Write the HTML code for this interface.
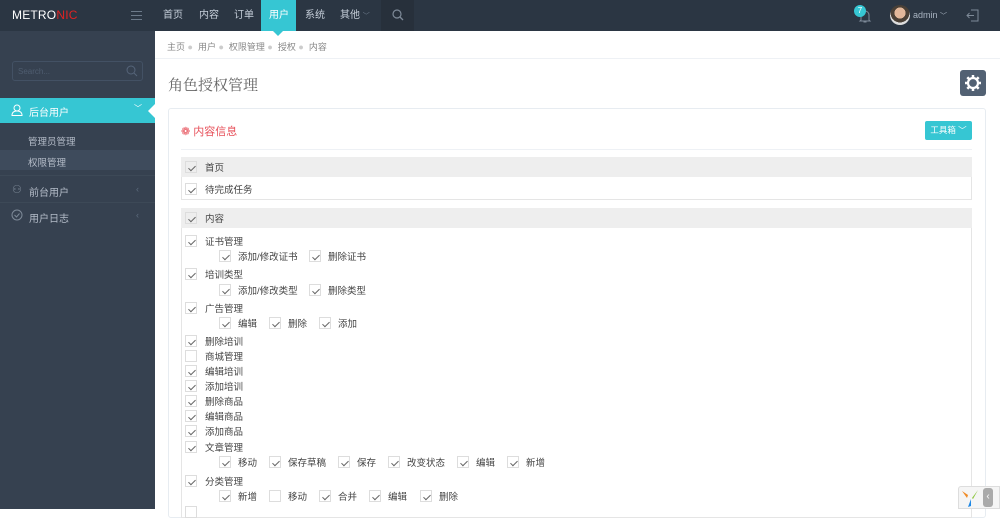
<!DOCTYPE html>
<html><head><meta charset="utf-8"><style>
*{margin:0;padding:0;box-sizing:border-box}
body{width:1000px;height:509px;overflow:hidden;position:relative;background:#fff;font-family:"Liberation Sans","Noto Sans CJK SC",sans-serif;font-size:10px;color:#333}
.a{position:absolute}
.top{left:0;top:0;width:1000px;height:31px;background:#2b3643}
.nav{top:1px;height:31px;line-height:30px;color:#c6cfda;font-size:10px}
.side{left:0;top:31px;width:155px;height:478px;background:#364150}
.cb{position:absolute;width:12px;height:12px;border:1px solid #ddd;background:#fff}
.cb.k::after{content:"";position:absolute;left:3.5px;top:1.5px;width:3px;height:6px;border:solid #666;border-width:0 1.1px 1.1px 0;transform:rotate(45deg)}
.t{position:absolute;font-size:9.5px;color:#444;line-height:12px;margin-top:1.5px}
.hd{position:absolute;left:181px;width:791px;height:20px;background:#eee}
</style></head><body>
<div class="a top"></div>
<div class="a" style="left:12px;top:8px;font-size:12px;color:#fff;letter-spacing:0.2px">METRO<span style="color:#e02222">NIC</span></div>
<div class="a" style="left:131px;top:11px;width:11px;height:1px;background:#6c7a8a;box-shadow:0 4px 0 #6c7a8a,0 8px 0 #6c7a8a"></div>
<div class="a nav" style="left:163px">首页</div>
<div class="a nav" style="left:199px">内容</div>
<div class="a nav" style="left:234px">订单</div>
<div class="a" style="left:261px;top:0;width:35px;height:31px;background:#36c6d3"></div>
<div class="a" style="left:273px;top:31px;width:0;height:0;border:5px solid transparent;border-top-color:#36c6d3;border-bottom:0"></div>
<div class="a nav" style="left:269px;color:#fff">用户</div>
<div class="a nav" style="left:305px">系统</div>
<div class="a nav" style="left:340px">其他 <span style="font-size:7px;color:#6c7a8a">﹀</span></div>
<div class="a" style="left:381px;top:0;width:33px;height:31px;background:#27303b"></div>
<svg class="a" style="left:392px;top:9px" width="12" height="12"><circle cx="5" cy="5" r="4" fill="none" stroke="#7e8a98" stroke-width="1.2"/><line x1="8" y1="8" x2="11" y2="11" stroke="#7e8a98" stroke-width="1.3"/></svg>
<svg class="a" style="left:858px;top:8px" width="14" height="16"><path d="M3 12V7a4 4 0 0 1 8 0v5l1 1H2z M5.5 14h3" fill="none" stroke="#7e8a98" stroke-width="1"/></svg>
<div class="a" style="left:854px;top:5px;width:12px;height:12px;border-radius:6px;background:#36c6d3;color:#fff;font-size:8px;text-align:center;line-height:12px">7</div>
<div class="a" style="left:890px;top:5px;width:20px;height:20px;border-radius:10px;background:radial-gradient(circle at 50% 40%,#e2b79a 0 35%,#4a4036 36% 60%,#ddd 61%)"></div>
<div class="a" style="left:913px;top:10px;font-size:9px;color:#a9b4c1">admin <span style="font-size:7px">﹀</span></div>
<svg class="a" style="left:966px;top:9px" width="13" height="13"><path d="M5 1h7v11H5 M1 6.5h7 M3.5 4l-2.5 2.5 2.5 2.5" fill="none" stroke="#7e8a98" stroke-width="1"/></svg>

<div class="a side"></div>
<div class="a" style="left:12px;top:61px;width:131px;height:20px;border:1px solid #435164;border-radius:3px"></div>
<div class="a" style="left:18px;top:67px;font-size:8px;color:#4f5d70">Search...</div>
<svg class="a" style="left:126px;top:65px" width="12" height="12"><circle cx="5" cy="5" r="4" fill="none" stroke="#56657a" stroke-width="1"/><line x1="8" y1="8" x2="11" y2="11" stroke="#56657a"/></svg>
<div class="a" style="left:0;top:98px;width:155px;height:25px;background:#36c6d3"></div>
<div class="a" style="left:148px;top:104px;width:0;height:0;border:7px solid transparent;border-right-color:#fff;border-left:0"></div>
<svg class="a" style="left:11px;top:104px" width="12" height="12"><circle cx="6" cy="4" r="3" fill="none" stroke="#fff"/><path d="M1 11.5c0-3 2-4.5 5-4.5s5 1.5 5 4.5z" fill="none" stroke="#fff"/></svg>
<div class="a" style="left:29px;top:104px;color:#fff;font-size:10px">后台用户</div>
<div class="a" style="left:134px;top:103px;color:#fff;font-size:8px">﹀</div>
<div class="a" style="left:0;top:150px;width:155px;height:20px;background:#3e4b5c"></div>
<div class="a" style="left:28px;top:134px;color:#b4bcc8;font-size:9.5px">管理员管理</div>
<div class="a" style="left:28px;top:155px;color:#b4bcc8;font-size:9.5px">权限管理</div>
<div class="a" style="left:0;top:175px;width:155px;height:1px;background:#3d4957"></div>
<div class="a" style="left:0;top:202px;width:155px;height:1px;background:#3d4957"></div>
<div class="a" style="left:12px;top:183px;color:#7e8a98;font-size:11px">⚇</div>
<div class="a" style="left:29px;top:184px;color:#b4bcc8;font-size:10px">前台用户</div>
<div class="a" style="left:136px;top:184px;color:#5d6c7e;font-size:9px">‹</div>
<svg class="a" style="left:11px;top:209px" width="12" height="12"><circle cx="6" cy="6" r="5" fill="none" stroke="#7e8a98"/><path d="M3.5 6l2 2 3-3.5" fill="none" stroke="#7e8a98"/></svg>
<div class="a" style="left:29px;top:210px;color:#b4bcc8;font-size:10px">用户日志</div>
<div class="a" style="left:136px;top:210px;color:#5d6c7e;font-size:9px">‹</div>

<div class="a" style="left:155px;top:58px;width:845px;height:1px;background:#eef1f5"></div>
<div class="a" style="left:167px;top:40px;font-size:9px;color:#888">主页 <span style="color:#ccc">●</span>&nbsp; 用户 <span style="color:#ccc">●</span>&nbsp; 权限管理 <span style="color:#ccc">●</span>&nbsp; 授权 <span style="color:#ccc">●</span>&nbsp; 内容</div>
<div class="a" style="left:168px;top:74px;font-size:15px;color:#666;font-family:'Noto Serif CJK SC','Noto Sans CJK SC',serif">角色授权管理</div>
<div class="a" style="left:960px;top:70px;width:26px;height:26px;background:#526173;border-radius:3px"></div>
<svg class="a" style="left:964px;top:74px" width="18" height="18" viewBox="0 0 18 18"><circle cx="9" cy="9" r="5" fill="none" stroke="#fff" stroke-width="2.2"/><g stroke="#fff" stroke-width="2.5"><line x1="9" y1="1" x2="9" y2="4"/><line x1="9" y1="14" x2="9" y2="17"/><line x1="1" y1="9" x2="4" y2="9"/><line x1="14" y1="9" x2="17" y2="9"/><line x1="3.3" y1="3.3" x2="5.4" y2="5.4"/><line x1="12.6" y1="12.6" x2="14.7" y2="14.7"/><line x1="3.3" y1="14.7" x2="5.4" y2="12.6"/><line x1="12.6" y1="5.4" x2="14.7" y2="3.3"/></g></svg>

<div class="a" style="left:168px;top:108px;width:818px;height:410px;border:1px solid #e7ecf1;border-radius:3px"></div>
<div class="a" style="left:181px;top:123px;font-size:11px;color:#e7505a">❁ 内容信息</div>
<div class="a" style="left:925px;top:121px;width:47px;height:19px;background:#36c6d3;border-radius:2px;color:#fff;font-size:8.5px;line-height:19px;text-align:center">工具箱 ﹀</div>
<div class="a" style="left:181px;top:149px;width:791px;height:1px;background:#eef1f5"></div>

<div class="hd" style="top:157px"></div>
<div class="a" style="left:181px;top:177px;width:791px;height:23px;border:1px solid #e5e5e5;border-top:0"></div>
<div class="hd" style="top:208px"></div>
<div class="a" style="left:181px;top:228px;width:791px;height:290px;border:1px solid #e5e5e5;border-top:0"></div>

<div class="cb k" style="left:185px;top:161px;background:#eee"></div><div class="t" style="left:205px;top:161px">首页</div>
<div class="cb k" style="left:185px;top:183px"></div><div class="t" style="left:205px;top:183px">待完成任务</div>
<div class="cb k" style="left:185px;top:212px;background:#eee"></div><div class="t" style="left:205px;top:212px">内容</div>

<div class="cb k" style="left:185px;top:235px"></div><div class="t" style="left:205px;top:235px">证书管理</div>
<div class="cb k" style="left:219px;top:250px"></div><div class="t" style="left:238px;top:250px">添加/修改证书</div>
<div class="cb k" style="left:309px;top:250px"></div><div class="t" style="left:328px;top:250px">删除证书</div>
<div class="cb k" style="left:185px;top:268px"></div><div class="t" style="left:205px;top:268px">培训类型</div>
<div class="cb k" style="left:219px;top:284px"></div><div class="t" style="left:238px;top:284px">添加/修改类型</div>
<div class="cb k" style="left:309px;top:284px"></div><div class="t" style="left:328px;top:284px">删除类型</div>
<div class="cb k" style="left:185px;top:302px"></div><div class="t" style="left:205px;top:302px">广告管理</div>
<div class="cb k" style="left:219px;top:317px"></div><div class="t" style="left:238px;top:317px">编辑</div>
<div class="cb k" style="left:269px;top:317px"></div><div class="t" style="left:288px;top:317px">删除</div>
<div class="cb k" style="left:319px;top:317px"></div><div class="t" style="left:338px;top:317px">添加</div>
<div class="cb k" style="left:185px;top:335px"></div><div class="t" style="left:205px;top:335px">删除培训</div>
<div class="cb" style="left:185px;top:350px"></div><div class="t" style="left:205px;top:350px">商城管理</div>
<div class="cb k" style="left:185px;top:365px"></div><div class="t" style="left:205px;top:365px">编辑培训</div>
<div class="cb k" style="left:185px;top:380px"></div><div class="t" style="left:205px;top:380px">添加培训</div>
<div class="cb k" style="left:185px;top:395px"></div><div class="t" style="left:205px;top:395px">删除商品</div>
<div class="cb k" style="left:185px;top:410px"></div><div class="t" style="left:205px;top:410px">编辑商品</div>
<div class="cb k" style="left:185px;top:425px"></div><div class="t" style="left:205px;top:425px">添加商品</div>
<div class="cb k" style="left:185px;top:441px"></div><div class="t" style="left:205px;top:441px">文章管理</div>
<div class="cb k" style="left:219px;top:456px"></div><div class="t" style="left:238px;top:456px">移动</div>
<div class="cb k" style="left:269px;top:456px"></div><div class="t" style="left:288px;top:456px">保存草稿</div>
<div class="cb k" style="left:338px;top:456px"></div><div class="t" style="left:357px;top:456px">保存</div>
<div class="cb k" style="left:388px;top:456px"></div><div class="t" style="left:407px;top:456px">改变状态</div>
<div class="cb k" style="left:457px;top:456px"></div><div class="t" style="left:476px;top:456px">编辑</div>
<div class="cb k" style="left:507px;top:456px"></div><div class="t" style="left:526px;top:456px">新增</div>
<div class="cb k" style="left:185px;top:475px"></div><div class="t" style="left:205px;top:475px">分类管理</div>
<div class="cb k" style="left:219px;top:490px"></div><div class="t" style="left:238px;top:490px">新增</div>
<div class="cb" style="left:269px;top:490px"></div><div class="t" style="left:288px;top:490px">移动</div>
<div class="cb k" style="left:319px;top:490px"></div><div class="t" style="left:338px;top:490px">合并</div>
<div class="cb k" style="left:369px;top:490px"></div><div class="t" style="left:388px;top:490px">编辑</div>
<div class="cb k" style="left:420px;top:490px"></div><div class="t" style="left:439px;top:490px">删除</div>
<div class="cb" style="left:185px;top:506px"></div>

<div class="a" style="left:958px;top:486px;width:42px;height:23px;background:#f5f5f5;border:1px solid #ddd;border-radius:3px 0 0 0"></div>
<svg class="a" style="left:960px;top:488px" width="20" height="20"><path d="M2 3l6 4-1 3z" fill="#f08a24"/><path d="M18 2l-6 8 1 1z" fill="#8cc63f"/><path d="M11 11l-3 8 3-1z" fill="#1e88e5"/></svg>
<div class="a" style="left:983px;top:488px;width:10px;height:19px;background:#aaa;border-radius:3px;color:#fff;font-size:10px;text-align:center;line-height:18px">‹</div>
</body></html>
